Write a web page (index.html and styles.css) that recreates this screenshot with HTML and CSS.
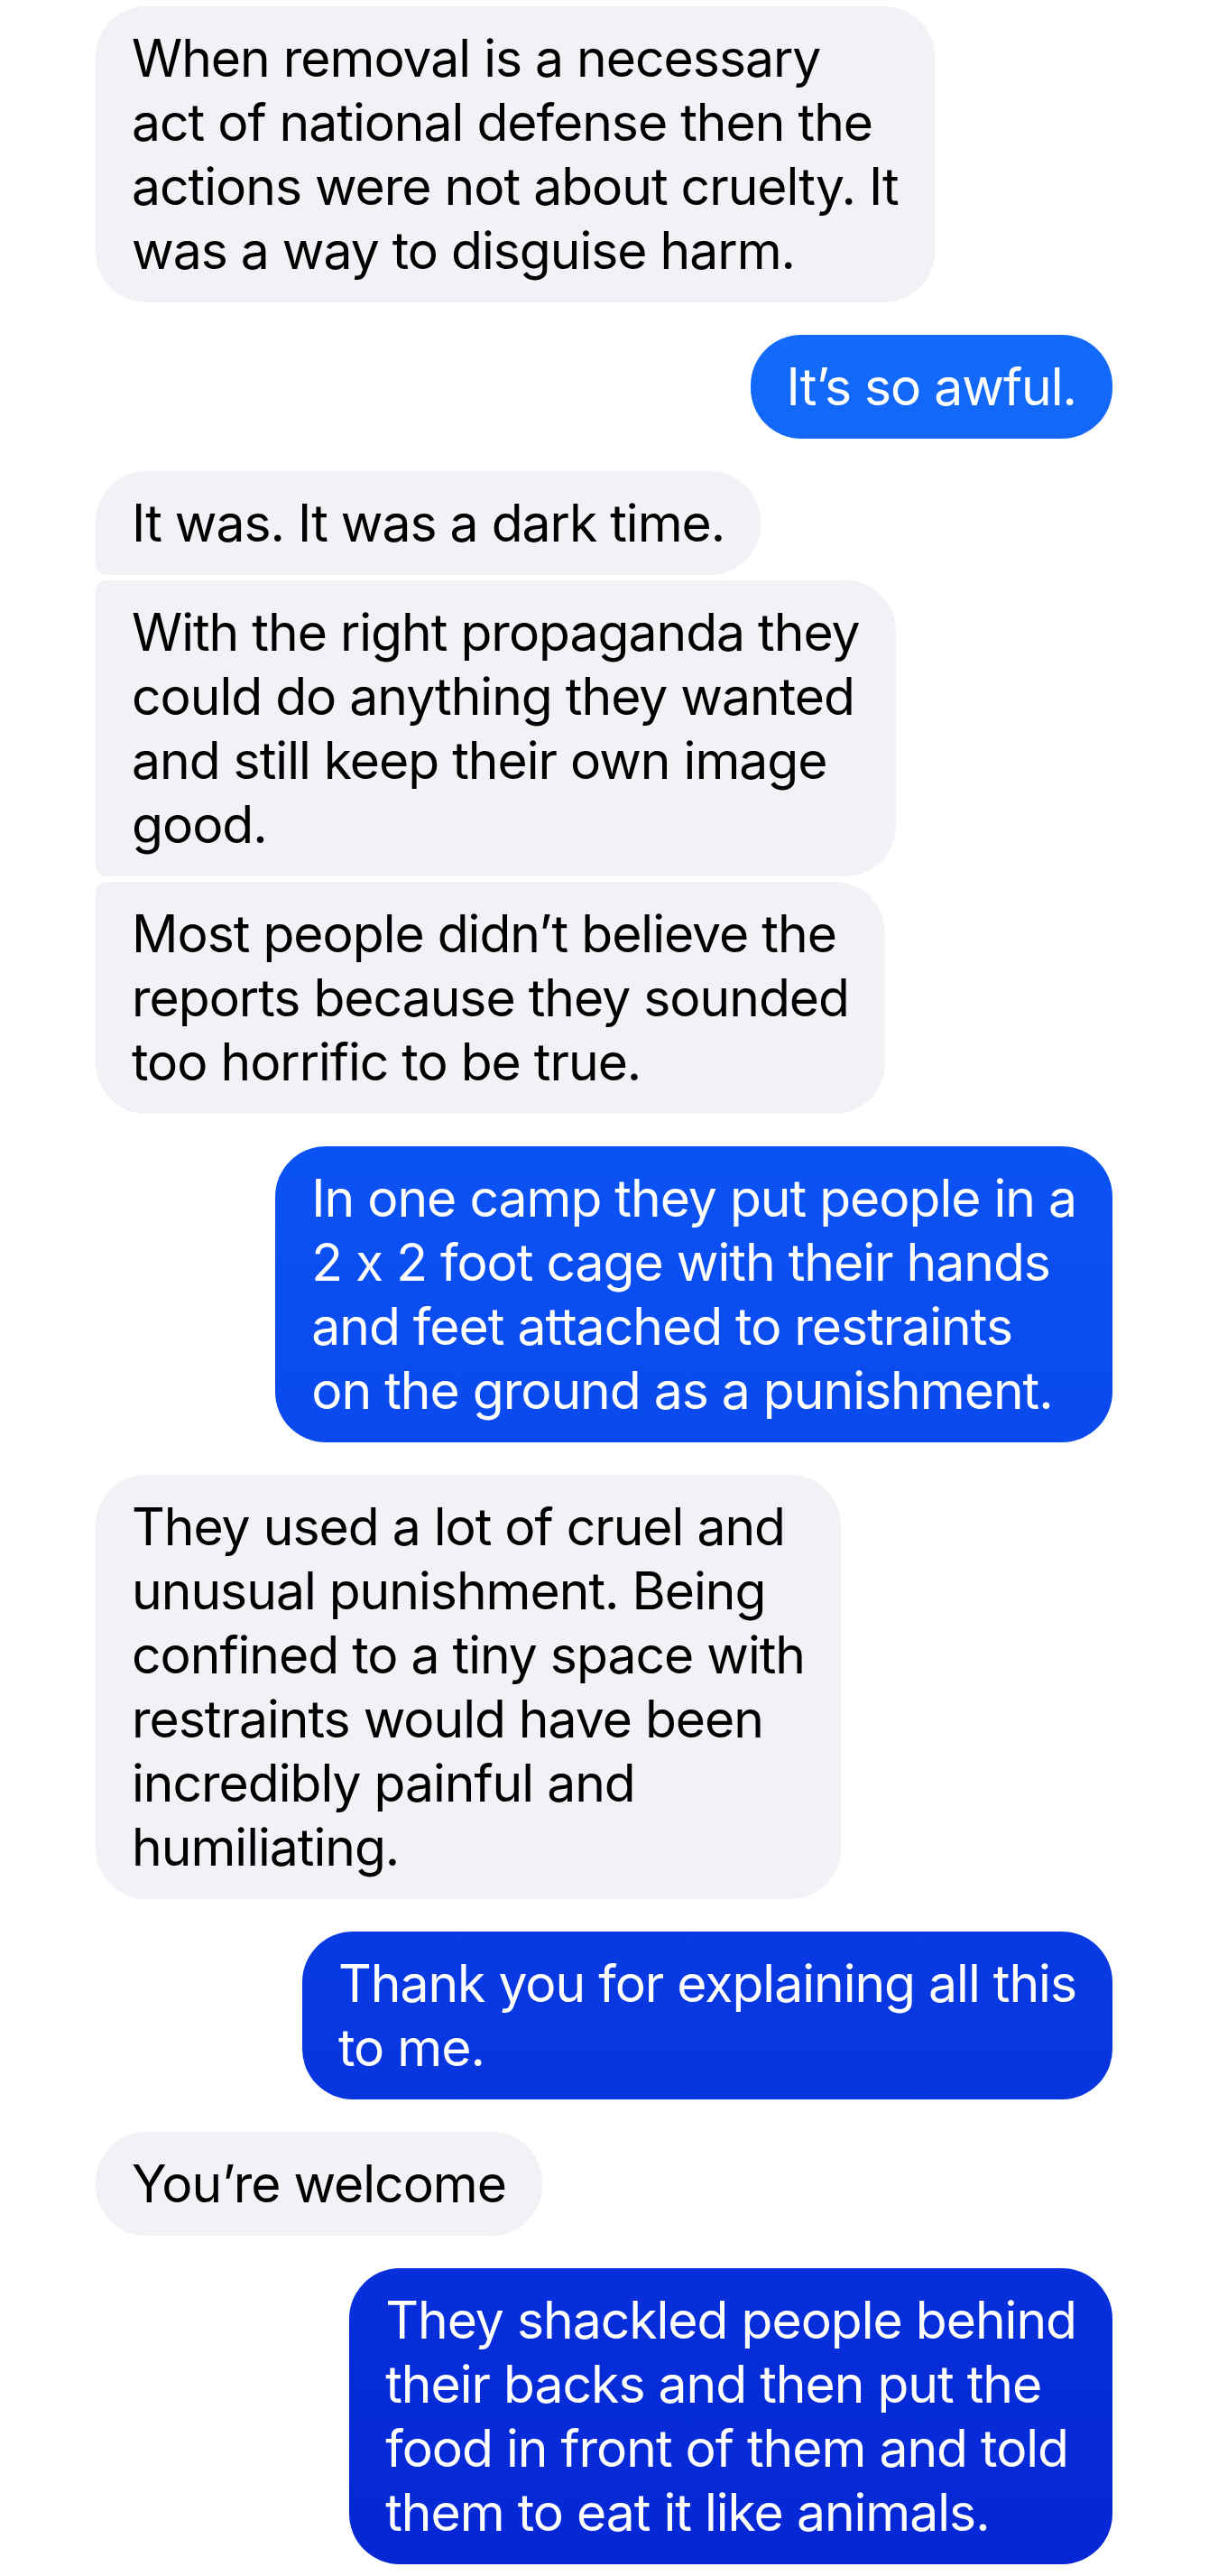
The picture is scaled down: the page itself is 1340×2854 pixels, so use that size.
FILE: index.html
```html
<!DOCTYPE html>
<html lang="en">
    <head>
        <meta charset="utf-8">
        <title>Messages</title>
        <link rel="stylesheet" href="styles.css">
</head>
<body>
    <main class="chat">
        <div class="group in">
            <p class="bubble">When removal is a necessary<br>act of national defense then the<br>actions were not about cruelty. It<br>was a way to disguise harm.</p>
        </div>

        <div class="group out">
            <p class="bubble">It’s so awful.</p>
        </div>

        <div class="group in">
            <p class="bubble first">It was. It was a dark time.</p>
            <p class="bubble middle">With the right propaganda they<br>could do anything they wanted<br>and still keep their own image<br>good.</p>
            <p class="bubble last">Most people didn’t believe the<br>reports because they sounded<br>too horrific to be true.</p>
        </div>

        <div class="group out">
            <p class="bubble">In one camp they put people in a<br>2 x 2 foot cage with their hands<br>and feet attached to restraints<br>on the ground as a punishment.</p>
        </div>

        <div class="group in">
            <p class="bubble">They used a lot of cruel and<br>unusual punishment. Being<br>confined to a tiny space with<br>restraints would have been<br>incredibly painful and<br>humiliating.</p>
        </div>

        <div class="group out">
            <p class="bubble">Thank you for explaining all this<br>to me.</p>
        </div>

        <div class="group in">
            <p class="bubble">You’re welcome</p>
        </div>

        <div class="group out">
            <p class="bubble">They shackled people behind<br>their backs and then put the<br>food in front of them and told<br>them to eat it like animals.</p>
        </div>
    </main>
</body>
</html>
```

FILE: styles.css
```css
body {
    margin: 0;

    background-color: #fff;
    font-family: "Inter", "Open Sans", sans-serif;
}

.chat {
    display: flex;
    flex-direction: column;
    gap: 36px;
    padding: 7px 107px 12px 106px;
}

.group {
    display: flex;
    flex-direction: column;
    gap: 6px;
}

.group.in {
    align-items: flex-start;
}

.group.out {
    align-items: flex-end;
}

.bubble {
    margin: 0;
    padding: 22px 40px;

    font-size: 57px;
    line-height: 71px;
    letter-spacing: -1px;
    white-space: nowrap;

    border-radius: 56px;
}

.in .bubble {
    color: #000;
    background-color: #f1f2f6;
}

.out .bubble {
    color: #fff;
    background: linear-gradient(to bottom, #1774fd 0%, #0b52f4 45%, #0526d4 100%) fixed;
}

.in .first {
    border-bottom-left-radius: 12px;
}

.in .middle {
    border-top-left-radius: 12px;
    border-bottom-left-radius: 12px;
}

.in .last {
    border-top-left-radius: 12px;
}
```
